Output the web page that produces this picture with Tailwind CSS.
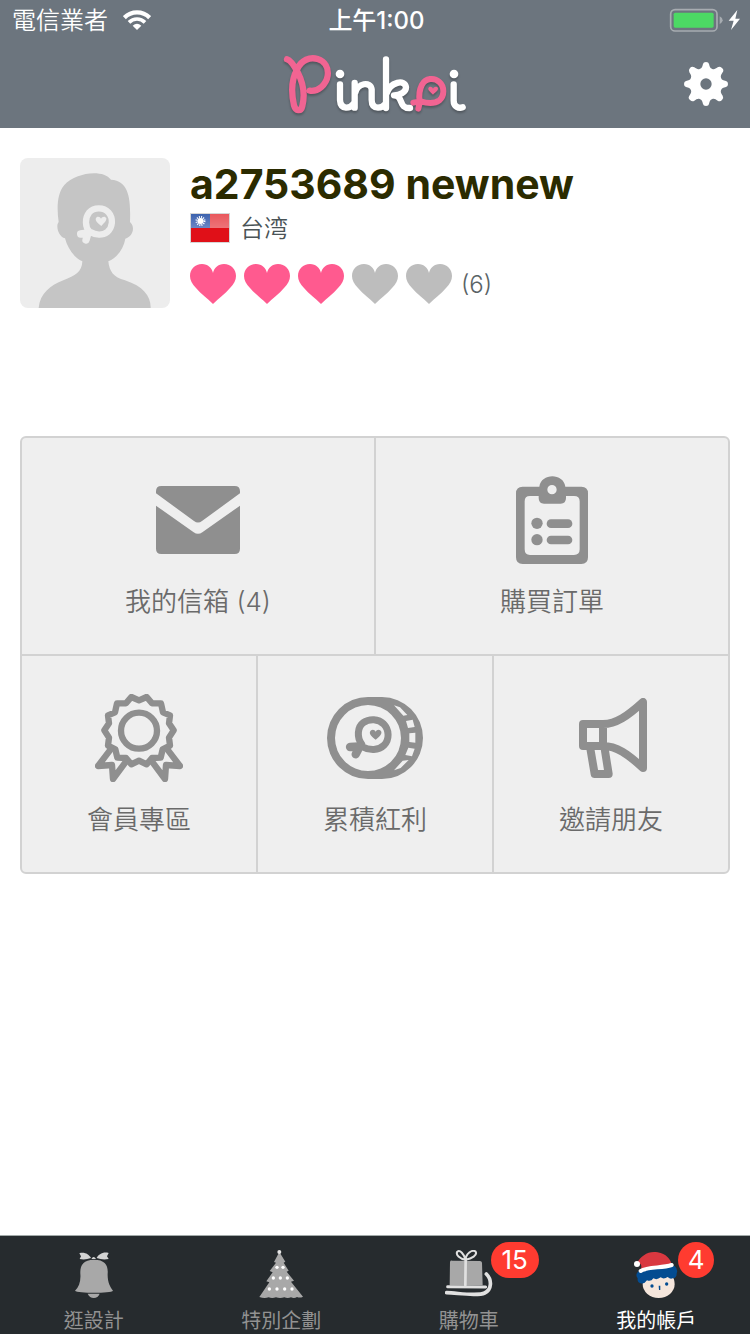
<!DOCTYPE html>
<html lang="zh-Hant">
<head>
<meta charset="utf-8">
<meta name="viewport" content="width=device-width, initial-scale=1">
<title>Pinkoi</title>
<script src="https://cdn.jsdelivr.net/npm/@tailwindcss/browser@4"></script>
</head>
<body class="flex min-h-screen flex-col bg-white font-['Inter','Noto_Sans_CJK_TC',sans-serif]">
<header class="bg-[#6c757e] text-white">
  <div class="grid h-10 grid-cols-[1fr_auto_1fr] items-center pr-[9px] pl-3 text-[24px] leading-9">
    <div class="flex items-center gap-[15px]">
      <span class="pt-0.5 font-[350]">電信業者</span>
      <svg class="h-5 w-7" viewBox="369 30 84 60" fill="none" stroke="currentColor" aria-label="Wi-Fi">
        <path d="M373 53A54 54 0 0 1 449 53" stroke-width="13"/>
        <path d="M387 67A34 34 0 0 1 435 67" stroke-width="11"/>
        <path d="M398 77Q411 66 424 77L411 90Z" fill="currentColor" stroke="none"/>
      </svg>
    </div>
    <time class="pt-0.5 font-medium">上午1:00</time>
    <svg class="h-6 w-[72px] justify-self-end" viewBox="58 25 216 72" aria-label="電池">
      <rect x="63" y="30" width="139" height="64" rx="13" fill="none" stroke="#a7acb1" stroke-width="5"/>
      <rect x="72" y="39" width="120" height="45" rx="5" fill="#4cd964"/>
      <path d="M210 50Q219 55 219 62T210 74Z" fill="#a7acb1"/>
      <path d="M263 31L237 63H252L244 91L271 57H257Z" fill="#fff"/>
    </svg>
  </div>
  <div class="grid h-22 grid-cols-[1fr_auto_1fr] items-center pr-[22px] pl-6">
    <svg class="col-start-2 h-17 w-47 drop-shadow-[0_2px_1px_rgba(0,0,0,0.25)]" viewBox="36 150 564 204" fill="none" stroke-linecap="round" stroke-linejoin="round" role="img" aria-label="Pinkoi">
      <g stroke="#fff" stroke-width="19">
        <path d="M210 253V300Q211 321 228 323Q240 324 250 312"/>
        <path d="M254 249V323M256 278C262 250 302 242 305 268V300Q305 322 324 323Q338 322 347 311"/>
        <path d="M348 178V324M350 280C360 246 406 236 408 262C408 278 388 286 372 286C402 288 384 326 420 324"/>
        <path d="M551 253V302C551 320 566 326 578 322"/>
      </g>
      <circle cx="210" cy="222" r="13" fill="#fff"/>
      <circle cx="552" cy="222" r="13" fill="#fff"/>
      <g stroke="#f16492">
        <path stroke-width="19" d="M51 178C64 182 74 200 83 217C101 252 104 290 97 318C93 336 77 334 72 316C64 280 64 238 82 207C94 180 120 170 143 177C165 184 176 204 173 227C169 254 144 276 119 272"/>
        <path stroke-width="18" d="M449 304C447 292 448 270 456 254C467 235 492 231 508 246C524 260 524 288 508 301C492 313 468 309 452 304L430 308M450 304L445 326"/>
      </g>
      <path d="M489 284C482 277 473 271 475 265C478 258 487 260 489 266C492 260 501 258 504 265C505 272 496 277 489 284Z" fill="#f16492"/>
    </svg>
    <button type="button" class="size-11 justify-self-end" aria-label="設定">
      <svg class="size-11" viewBox="-66 -66 132 132">
        <path fill="#fff" fill-rule="evenodd" d="M-9 -60Q-8 -66 0 -66T9 -60C11 -52 12 -47 19 -45C25 -43 29 -46 35 -50Q41 -54 48 -48T50 -35C46 -29 43 -25 45 -19C47 -12 52 -11 60 -9Q66 -8 66 0T60 9C52 11 47 12 45 19C43 25 46 29 50 35Q54 41 48 48T35 50C29 46 25 43 19 45C12 47 11 52 9 60Q8 66 0 66T-9 60C-11 52 -12 47 -19 45C-25 43 -29 46 -35 50Q-41 54 -48 48T-50 35C-46 29 -43 25 -45 19C-47 12 -52 11 -60 9Q-66 8 -66 0T-60 -9C-52 -11 -47 -12 -45 -19C-43 -25 -46 -29 -50 -35Q-54 -41 -48 -48T-35 -50C-29 -46 -25 -43 -19 -45C-12 -47 -11 -52 -9 -60ZM0 -17A17 17 0 1 0 0 17A17 17 0 1 0 0 -17Z"/>
      </svg>
    </button>
  </div>
</header>

<main class="flex-1 px-5 pt-[30px]">
  <section class="flex gap-5">
    <svg class="size-[150px] shrink-0 rounded-lg" viewBox="30 24 450 450" role="img" aria-label="頭像">
      <path fill="#ededed" d="M30 24H480V474H30Z"/>
      <path fill="#c5c5c5" d="M86 474C90 430 122 406 160 391C196 377 216 366 217 334C190 322 172 292 165 265C146 260 136 228 146 216C140 175 141 130 163 105C192 70 277 54 303 89C360 92 362 154 360 216C376 230 370 258 346 266C341 294 323 323 295 334C298 364 310 382 345 391C400 409 423 439 422 474Z"/>
      <g fill="none" stroke="#ededed" stroke-linecap="round">
        <path stroke-width="19" d="M239 246C224 230 225 203 237 188C252 171 281 171 296 188C311 205 308 232 292 246C278 257 257 256 241 246"/>
        <path stroke-width="22" d="M234 249L212 252M234 249L228 270"/>
      </g>
      <path fill="#ededed" d="M274 228C264 220 254 212 258 204C262 197 271 200 273 206C277 199 286 198 289 205C290 214 281 220 274 228Z"/>
    </svg>
    <div class="min-w-0">
      <h1 class="text-[41px] leading-[52px] font-bold text-[#2b2b00]">a2753689 newnew</h1>
      <div class="flex h-9 items-center gap-2.5">
        <svg class="h-[30px] w-10" viewBox="0 0 40 30" role="img" aria-label="台灣">
          <defs><linearGradient id="gloss" x2="0" y2="1"><stop stop-color="#fff" stop-opacity=".3"/><stop offset="1" stop-color="#fff" stop-opacity=".42"/></linearGradient>
          <linearGradient id="canton" x2="0" y2="1"><stop stop-color="#3c62ae"/><stop offset="1" stop-color="#6c86c4"/></linearGradient></defs>
          <path fill="#bbb" d="M0 0H40V30H0Z" opacity=".6"/>
          <path fill="#e01018" d="M1 1H39V29H1Z"/>
          <path fill="url(#gloss)" d="M1 1H39V15H1Z"/>
          <path fill="url(#canton)" d="M1 1H20V15H1Z"/>
          <circle cx="10.500" cy="8" r="3" fill="#fff"/>
          <circle cx="10.500" cy="8" r="4" fill="none" stroke="#fff" stroke-width="2" stroke-dasharray="1 1.100"/>
        </svg>
        <span class="pt-0.5 text-[24px] leading-[34px] font-[350] text-[#4a5356] font-['Inter','Noto_Sans_CJK_SC',sans-serif]">台湾</span>
      </div>
      <div class="mt-[18px] flex h-10 items-center gap-2">
        <svg class="h-10 w-[46px]" viewBox="0 0 46 40" fill="#ff5a8f"><path id="heart" d="M23 40C17 34 11 30 6 24C2 20 0 16 0 12C0 5 5 0 12 0C18 0 22 4 23 9C24 4 28 0 34 0C41 0 46 5 46 12C46 16 44 20 40 24C35 30 29 34 23 40Z"/></svg>
        <svg class="h-10 w-[46px]" viewBox="0 0 46 40" fill="#ff5a8f"><use href="#heart"/></svg>
        <svg class="h-10 w-[46px]" viewBox="0 0 46 40" fill="#ff5a8f"><use href="#heart"/></svg>
        <svg class="h-10 w-[46px]" viewBox="0 0 46 40" fill="#bdbdbd"><use href="#heart"/></svg>
        <svg class="h-10 w-[46px]" viewBox="0 0 46 40" fill="#bdbdbd"><use href="#heart"/></svg>
        <span class="pt-0.5 pl-px text-[24px] font-[350] text-[#5a6366]">(6)</span>
      </div>
    </div>
  </section>

  <nav class="mt-32 grid grid-cols-6 gap-0.5 overflow-hidden rounded-md border-2 border-[#d2d2d2] bg-[#d2d2d2] text-[26px] leading-8 font-[350] text-[#6a6a6a]" aria-label="帳戶功能">
    <a href="#inbox" class="col-span-3 flex flex-col items-center gap-[22px] bg-[#efefef] pt-[38px] pb-9">
      <span class="flex h-22 items-center">
        <svg class="h-17 w-21" viewBox="138 168 252 204" fill="#8f8f8f">
          <path d="M138 190V184Q138 168 154 168H374Q390 168 390 184V190L276 273Q264 282 252 273Z"/>
          <path d="M138 227L251 307Q264 316 277 307L390 227V356Q390 372 374 372H154Q138 372 138 356Z"/>
        </svg>
      </span>
      <span>我的信箱 (4)</span>
    </a>
    <a href="#orders" class="col-span-3 flex flex-col items-center gap-[22px] bg-[#efefef] pt-[38px] pb-9">
      <svg class="h-22 w-18" viewBox="138 48 216 264" fill="#8f8f8f">
        <path fill-rule="evenodd" d="M158 80H208C213 38 281 38 286 80H334Q354 80 354 100V292Q354 312 334 312H158Q138 312 138 292V100Q138 80 158 80ZM206 108H180Q164 108 164 124V268Q164 285 180 285H312Q329 285 329 268V124Q329 108 312 108H288V114Q288 131 272 131H222Q206 131 206 114ZM246 75A14 14 0 1 0 246 103A14 14 0 1 0 246 75Z"/>
        <circle cx="201" cy="190" r="17"/><circle cx="201" cy="239" r="17"/>
        <rect x="230" y="178" width="77" height="26" rx="13"/><rect x="230" y="227" width="77" height="26" rx="13"/>
      </svg>
      <span>購買訂單</span>
    </a>
    <a href="#member" class="col-span-2 flex flex-col items-center gap-[22px] bg-[#efefef] pt-[38px] pb-9">
      <svg class="size-22" viewBox="75 162 264 264" fill="none" stroke="#8f8f8f" stroke-width="19" stroke-linecap="round" stroke-linejoin="round">
        <path d="M184 171L207 181L230 171L246 190H273L279 217L300 226L297 250L311 271L297 293L300 317L278 328L272 353L246 354L230 373L207 362L184 373L168 354L142 353L136 328L114 317L117 293L103 271L117 250L114 226L135 217L141 190H168Z"/>
        <circle cx="207" cy="272" r="54"/>
        <path d="M122 328L84 378L126 375L129 417L170 362M292 328L330 378L288 375L285 417L244 362"/>
      </svg>
      <span>會員專區</span>
    </a>
    <a href="#points" class="col-span-2 flex flex-col items-center gap-[22px] bg-[#efefef] pt-[38px] pb-9">
      <span class="flex h-22 items-center">
        <svg class="h-[82px] w-24" viewBox="51 51 288 246">
          <path fill="#8f8f8f" fill-rule="evenodd" d="M174 51H216A123 123 0 0 1 216 297H174A123 123 0 0 1 174 51ZM174 75A99 99 0 1 0 174 273A99 99 0 1 0 174 75Z"/>
          <path fill="#efefef" d="M252 76L270 82L292 105L280 107ZM288 123L308 119L314 141L294 144ZM298 160L316 158V188L298 186ZM295 203L314 206L306 229L286 225ZM252 271L278 242L296 240L272 264Z"/>
          <g fill="none" stroke="#8f8f8f" stroke-linecap="round">
            <path stroke-width="21" d="M155 192C140 172 142 141 160 128C178 115 206 116 221 132C238 149 239 179 222 196C206 212 178 212 157 200"/>
            <path stroke-width="25" d="M147 199L120 201M149 200L137 223"/>
          </g>
          <path fill="#8f8f8f" d="M197 179C187 170 177 164 180 155C183 147 194 147 197 155C200 147 211 147 214 155C216 164 207 170 197 179Z"/>
        </svg>
      </span>
      <span>累積紅利</span>
    </a>
    <a href="#invite" class="col-span-2 flex flex-col items-center gap-[22px] bg-[#efefef] pt-[38px] pb-9">
      <span class="flex h-22 items-center pl-1">
        <svg class="h-20 w-17" viewBox="117 54 204 240" fill="none" stroke="#8f8f8f" stroke-width="24" stroke-linejoin="round">
          <path d="M129 132H189V198H129ZM189 132C228 132 263 108 309 66V264C263 222 230 198 189 198M150 200L164 282H206L193 200"/>
        </svg>
      </span>
      <span>邀請朋友</span>
    </a>
  </nav>
</main>

<nav class="grid grid-cols-4 border-t border-[#a2aaa9] bg-[#262b2e] text-[20px] leading-[26px] text-[#929292]" aria-label="主選單">
  <a href="#browse" class="relative flex flex-col items-center gap-2.5 pt-3.5">
    <svg class="h-12 w-[38px]" viewBox="102 60 114 144">
      <path fill="#a8a8a8" d="M159 89C192 89 202 106 200 131C199 155 207 171 216 182C211 190 109 190 102 182C114 171 120 153 118 131C117 106 126 89 159 89ZM140 191H176C171 208 146 208 140 191Z"/>
      <path fill="#d3d3d3" d="M115 70C130 65 144 73 150 84Q132 91 116 87L120 79ZM203 69C187 64 172 73 167 84Q185 91 203 87L198 79ZM151 87Q158 75 165 87Z"/>
    </svg>
    <span>逛設計</span>
  </a>
  <a href="#special" class="relative flex flex-col items-center gap-2.5 pt-3.5">
    <svg class="h-12 w-11" viewBox="659 60 132 144">
      <path fill="#a8a8a8" d="M720 66L738 95L733 98L748 122L742 125L764 152L755 155L791 200Q782 205 773 201Q765 206 755 202Q745 206 735 202Q722 206 710 202Q698 206 688 202Q675 206 660 201L690 157L681 154L700 127L691 123L710 98L704 96Z"/>
      <circle cx="720" cy="66" r="6" fill="#e5e5e5"/>
      <g fill="#fff"><circle cx="713" cy="112" r="5"/><circle cx="731" cy="112" r="5"/><circle cx="702" cy="144" r="5"/><circle cx="723" cy="144" r="5"/><circle cx="744" cy="144" r="5"/><circle cx="690" cy="177" r="5"/><circle cx="713" cy="177" r="5"/><circle cx="736" cy="177" r="5"/><circle cx="758" cy="177" r="5"/></g>
    </svg>
    <span>特別企劃</span>
  </a>
  <a href="#cart" class="relative flex flex-col items-center gap-2.5 pt-3.5">
    <svg class="size-12" viewBox="75 60 144 144" fill="none" stroke="#e0e0e0" stroke-linecap="round">
      <path fill="#a8a8a8" stroke="none" d="M90 96Q91 91 97 92L180 93Q185 93 186 98L188 166H89Z"/>
      <path stroke-width="8" d="M137 92L136 166"/>
      <path stroke-width="6" d="M137 89C119 87 106 74 112 65C120 58 132 73 137 89C137 72 156 57 167 65C173 76 155 86 137 89Z"/>
      <path stroke-width="9" d="M83 170L197 171"/>
      <path stroke-width="11" d="M80 188C120 190 174 199 194 189C215 179 217 150 199 132"/>
    </svg>
    <span>購物車</span>
    <span class="absolute top-1.5 left-1/2 ml-[22px] h-9 w-12 rounded-full bg-[#ff3b30] text-center text-[26px] leading-9 text-white">15</span>
  </a>
  <a href="#account" class="relative flex flex-col items-center gap-2.5 pt-3.5 text-white" aria-current="page">
    <svg class="h-12 w-11" viewBox="641 60 132 144">
      <ellipse cx="715" cy="162" rx="48" ry="42" fill="#f5e6dc"/>
      <path fill="#034c91" d="M655 124L763 108Q774 118 769 130Q770 143 757 145Q750 149 742 141Q730 149 721 142Q710 151 699 145Q692 156 680 151Q672 163 661 160Q650 157 652 145Q643 132 655 124Z"/>
      <path fill="#d93840" d="M651 98C661 77 686 61 712 67C737 71 751 87 755 106L661 123Q666 104 659 101Z"/>
      <path d="M661 123C685 108 724 116 754 105" fill="none" stroke="#fff" stroke-width="12" stroke-linecap="round"/>
      <circle cx="650" cy="102" r="9" fill="#fff"/>
      <g fill="#034c91"><circle cx="695" cy="168" r="5"/><circle cx="739" cy="162" r="5"/><path d="M715 167H720V180H716Z"/></g>
    </svg>
    <span>我的帳戶</span>
    <span class="absolute top-1.5 left-1/2 ml-[22px] size-9 rounded-full bg-[#ff3b30] text-center text-[26px] leading-9 text-white">4</span>
  </a>
</nav>
</body>
</html>
